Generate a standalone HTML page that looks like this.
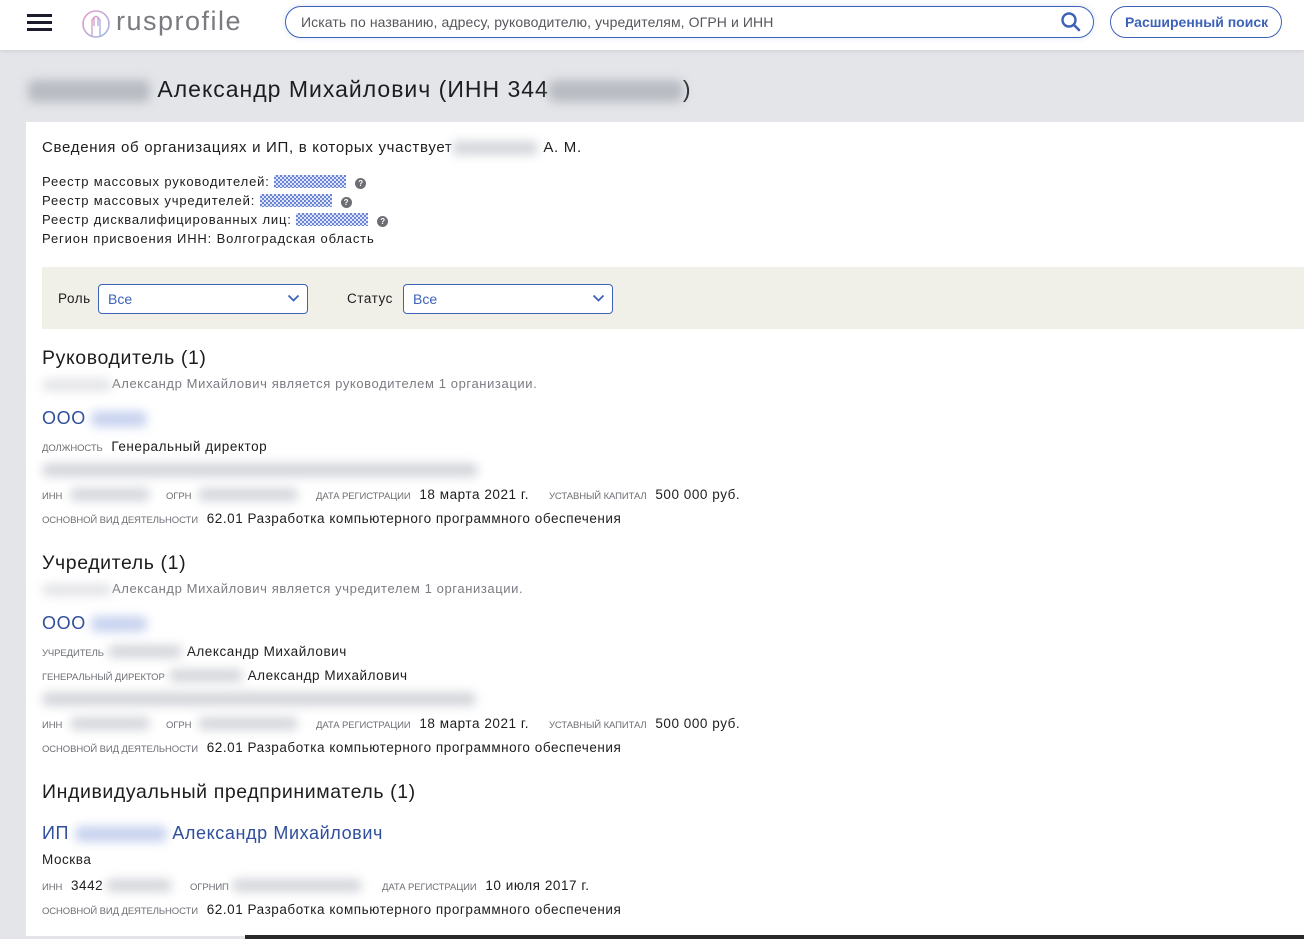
<!DOCTYPE html>
<html><head><meta charset="utf-8">
<style>
*{margin:0;padding:0;box-sizing:border-box}
body{width:1304px;height:939px;overflow:hidden;background:#e3e5e9;font-family:"Liberation Sans",sans-serif;color:#1d1d1f;position:relative}
.a{position:absolute;white-space:nowrap}
.hdr{position:absolute;left:0;top:0;width:1304px;height:50px;background:#fff;box-shadow:0 1px 4px rgba(0,0,0,.1)}
.card{position:absolute;left:26px;top:122px;width:1278px;height:814px;background:#fff}
.bl{display:inline-block;background:#d4d6db;filter:blur(5px);border-radius:6px;vertical-align:middle}
.blb{display:inline-block;background:#c8d3ef;filter:blur(5px);border-radius:6px;vertical-align:middle}
.lbl{font-size:9.5px;color:#6d6f75;text-transform:uppercase;letter-spacing:-.1px}
.v{font-size:13.5px;color:#1d1d1f;letter-spacing:.55px}
.grey{font-size:13px;color:#7a7c82;letter-spacing:.6px}
.h2{font-size:19.5px;color:#1d1d1f;letter-spacing:.6px}
.lnk{font-size:18px;color:#2f4e9c;letter-spacing:.6px}
.chk{display:inline-block;width:72px;height:13px;vertical-align:-2px;background-image:repeating-conic-gradient(#6a85d6 0 25%,#dfe5f7 0 50%);background-size:4px 4px}
.q{display:inline-block;width:11px;height:11px;border-radius:50%;background:#6c6e74;color:#fff;font-size:8px;text-align:center;line-height:11px;font-weight:bold;vertical-align:0;letter-spacing:0}
.sel{position:absolute;height:30px;border:1px solid #3d62b8;border-radius:4px;background:#fff;font-size:14px;color:#3d62b8;padding:6px 9px}
</style></head><body>
<div class="hdr"></div>
<div class="a" style="left:27px;top:14px;width:25px;height:3px;background:#1b1b2b"></div>
<div class="a" style="left:27px;top:21px;width:25px;height:3px;background:#1b1b2b"></div>
<div class="a" style="left:27px;top:28px;width:25px;height:3px;background:#1b1b2b"></div>
<svg class="a" style="left:81px;top:8px" width="30" height="32" viewBox="0 0 30 32"><defs><linearGradient id="g" x1="0" y1="0" x2="1" y2="1"><stop offset="0" stop-color="#e79ac7"/><stop offset="1" stop-color="#9eb7e6"/></linearGradient></defs><circle cx="15" cy="16" r="13" fill="none" stroke="url(#g)" stroke-width="1.6"/><path d="M11 28 V12 Q15 5 19 12 V28 M13 18 V10 M17 18 V10" fill="none" stroke="url(#g)" stroke-width="1.4"/></svg>
<div class="a" style="left:116px;top:6px;font-size:27px;color:#7a7b80;letter-spacing:1.5px">rusprofile</div>
<div class="a" style="left:285px;top:6px;width:809px;height:32px;border:1px solid #3d62b8;border-radius:16px;background:#fff;box-shadow:0 0 6px rgba(61,98,184,.2)"></div>
<div class="a" style="left:301px;top:14px;font-size:14px;color:#55575c;letter-spacing:.1px">Искать по названию, адресу, руководителю, учредителям, ОГРН и ИНН</div>
<svg class="a" style="left:1060px;top:11px" width="22" height="22" viewBox="0 0 22 22"><circle cx="9" cy="9" r="6.5" fill="none" stroke="#3d62b8" stroke-width="2.4"/><path d="M14 14 L19 19" stroke="#3d62b8" stroke-width="2.6" stroke-linecap="round"/></svg>
<div class="a" style="left:1110px;top:6px;width:172px;height:32px;border:1px solid #3d62b8;border-radius:16px;background:#fff"></div>
<div class="a" style="left:1125px;top:14px;font-size:14px;font-weight:bold;color:#3d62b8">Расширенный поиск</div>

<div class="a" style="left:28px;top:76px;font-size:23px;color:#1d1d1f;letter-spacing:1px"><span class="bl" style="width:122px;height:22px;background:#b8bbc2"></span> Александр Михайлович (ИНН 344<span class="bl" style="width:134px;height:22px;background:#b8bbc2"></span>)</div>

<div class="card"></div>
<div class="a" style="left:42px;top:139px;font-size:15px;letter-spacing:.7px">Сведения об организациях и ИП, в которых участвует<span class="bl" style="width:86px;height:14px"></span> А. М.</div>
<div class="a v" style="left:42px;top:174px;font-size:13px;letter-spacing:.85px">Реестр массовых руководителей: <span class="chk"></span> &nbsp;<span class="q">?</span></div>
<div class="a v" style="left:42px;top:193px;font-size:13px;letter-spacing:.85px">Реестр массовых учредителей: <span class="chk"></span> &nbsp;<span class="q">?</span></div>
<div class="a v" style="left:42px;top:212px;font-size:13px;letter-spacing:.85px">Реестр дисквалифицированных лиц: <span class="chk"></span> &nbsp;<span class="q">?</span></div>
<div class="a v" style="left:42px;top:231px;font-size:13px;letter-spacing:.85px">Регион присвоения ИНН: Волгоградская область</div>

<div class="a" style="left:42px;top:267px;width:1262px;height:62px;background:#f1f0e8"></div>
<div class="a v" style="left:58px;top:291px">Роль</div>
<div class="sel" style="left:98px;top:284px;width:210px">Все</div>
<svg class="a" style="left:287px;top:294px" width="13" height="9"><path d="M1.5 1.5 L6.5 6.5 L11.5 1.5" fill="none" stroke="#3d62b8" stroke-width="1.8"/></svg>
<div class="a v" style="left:347px;top:291px">Статус</div>
<div class="sel" style="left:403px;top:284px;width:210px">Все</div>
<svg class="a" style="left:592px;top:294px" width="13" height="9"><path d="M1.5 1.5 L6.5 6.5 L11.5 1.5" fill="none" stroke="#3d62b8" stroke-width="1.8"/></svg>

<div class="a h2" style="left:42px;top:347px">Руководитель (1)</div>
<div class="a grey" style="left:42px;top:376px"><span class="bl" style="width:70px;height:12px;background:#e3e4e7"></span>Александр Михайлович является руководителем 1 организации.</div>
<div class="a lnk" style="left:42px;top:408px">ООО <span class="blb" style="width:56px;height:16px"></span></div>
<div class="a" style="left:42px;top:438px"><span class="lbl">должность</span> <span class="v">&nbsp;Генеральный директор</span></div>
<div class="a" style="left:42px;top:461px"><span class="bl" style="width:436px;height:14px"></span></div>
<div class="a" style="left:42px;top:486px"><span class="lbl">инн</span></div><div class="a" style="left:70px;top:486px"><span class="bl" style="width:80px;height:13px"></span></div>
<div class="a" style="left:166px;top:486px"><span class="lbl">огрн</span></div><div class="a" style="left:198px;top:486px"><span class="bl" style="width:100px;height:13px"></span></div>
<div class="a" style="left:316px;top:486px"><span class="lbl">дата регистрации</span> <span class="v">&nbsp;18 марта 2021 г.</span></div>
<div class="a" style="left:549px;top:486px"><span class="lbl">уставный капитал</span> <span class="v">&nbsp;500 000 руб.</span></div>
<div class="a" style="left:42px;top:510px"><span class="lbl">основной вид деятельности</span> <span class="v">&nbsp;62.01 Разработка компьютерного программного обеспечения</span></div>

<div class="a h2" style="left:42px;top:552px">Учредитель (1)</div>
<div class="a grey" style="left:42px;top:581px"><span class="bl" style="width:70px;height:12px;background:#e3e4e7"></span>Александр Михайлович является учредителем 1 организации.</div>
<div class="a lnk" style="left:42px;top:613px">ООО <span class="blb" style="width:56px;height:16px"></span></div>
<div class="a" style="left:42px;top:643px"><span class="lbl">учредитель</span> <span class="bl" style="width:74px;height:13px"></span> <span class="v">Александр Михайлович</span></div>
<div class="a" style="left:42px;top:667px"><span class="lbl">генеральный директор</span> <span class="bl" style="width:74px;height:13px"></span> <span class="v">Александр Михайлович</span></div>
<div class="a" style="left:42px;top:690px"><span class="bl" style="width:434px;height:14px"></span></div>
<div class="a" style="left:42px;top:715px"><span class="lbl">инн</span></div><div class="a" style="left:70px;top:715px"><span class="bl" style="width:80px;height:13px"></span></div>
<div class="a" style="left:166px;top:715px"><span class="lbl">огрн</span></div><div class="a" style="left:198px;top:715px"><span class="bl" style="width:100px;height:13px"></span></div>
<div class="a" style="left:316px;top:715px"><span class="lbl">дата регистрации</span> <span class="v">&nbsp;18 марта 2021 г.</span></div>
<div class="a" style="left:549px;top:715px"><span class="lbl">уставный капитал</span> <span class="v">&nbsp;500 000 руб.</span></div>
<div class="a" style="left:42px;top:739px"><span class="lbl">основной вид деятельности</span> <span class="v">&nbsp;62.01 Разработка компьютерного программного обеспечения</span></div>

<div class="a h2" style="left:42px;top:781px">Индивидуальный предприниматель (1)</div>
<div class="a lnk" style="left:42px;top:823px">ИП <span class="blb" style="width:92px;height:16px"></span> Александр Михайлович</div>
<div class="a v" style="left:42px;top:852px">Москва</div>
<div class="a" style="left:42px;top:877px"><span class="lbl">инн</span> <span class="v">&nbsp;3442</span></div><div class="a" style="left:106px;top:877px"><span class="bl" style="width:66px;height:13px"></span></div>
<div class="a" style="left:190px;top:877px"><span class="lbl">огрнип</span></div><div class="a" style="left:232px;top:877px"><span class="bl" style="width:130px;height:13px"></span></div>
<div class="a" style="left:382px;top:877px"><span class="lbl">дата регистрации</span> <span class="v">&nbsp;10 июля 2017 г.</span></div>
<div class="a" style="left:42px;top:901px"><span class="lbl">основной вид деятельности</span> <span class="v">&nbsp;62.01 Разработка компьютерного программного обеспечения</span></div>

<div class="a" style="left:245px;top:935px;width:1059px;height:4px;background:#2a2a2a"></div>
</body></html>
